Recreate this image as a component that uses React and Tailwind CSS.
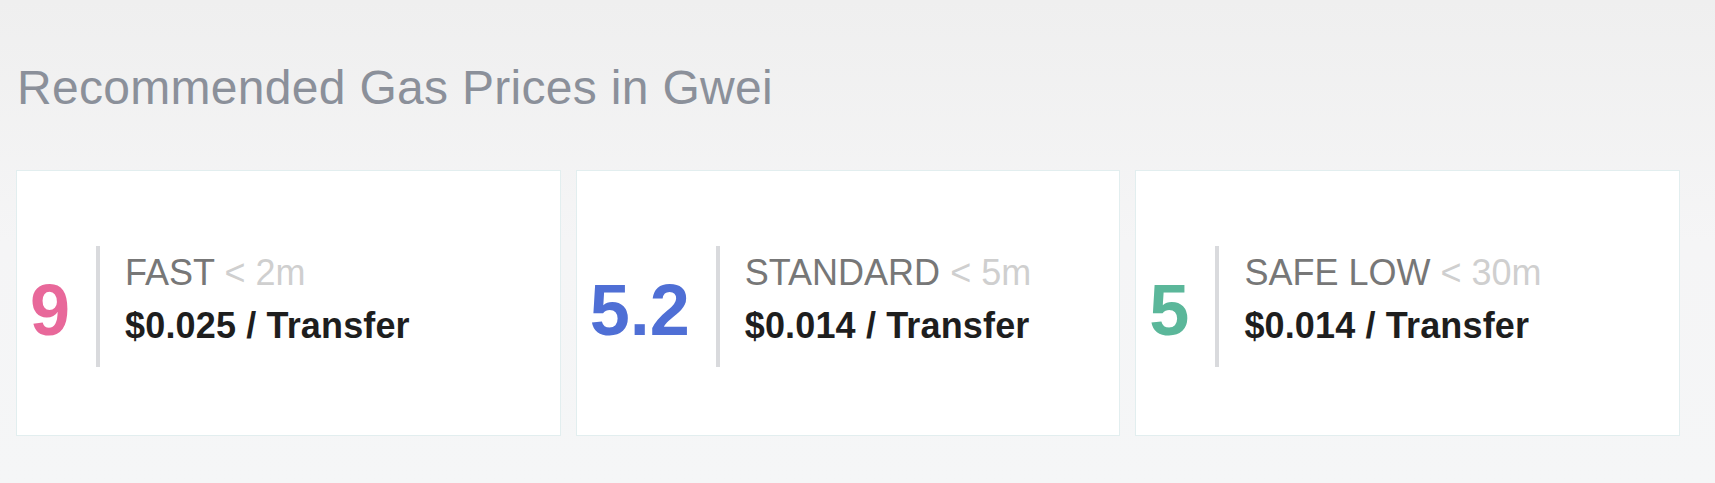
import React from "react";

const cards = [
  { value: "9", color: "text-[#e8689a]", label: "FAST", time: "< 2m", price: "$0.025 / Transfer" },
  { value: "5.2", color: "text-[#4f6fd5]", label: "STANDARD", time: "< 5m", price: "$0.014 / Transfer" },
  { value: "5", color: "text-[#5bb79a]", label: "SAFE LOW", time: "< 30m", price: "$0.014 / Transfer" },
];

export default function App() {
  return (
    <div
      className="w-[1715px] h-[483px] bg-gradient-to-b from-[#efefef] via-[#f5f5f6] to-[#f5f6f7] overflow-hidden"
      style={{ fontFamily: '"Liberation Sans", Arial, sans-serif' }}
    >
      <div className="pl-[16px] pt-[64px]">
        <h1 className="text-[48px] leading-[48px] tracking-[0.3px] text-[#8b909a] font-normal pl-[1px]">
          Recommended Gas Prices in Gwei
        </h1>
        <div className="mt-[58px] w-[1664px] grid grid-cols-3 gap-[15px]">
          {cards.map((c) => (
            <div
              key={c.label}
              className="h-[266px] bg-white border border-[#e2eeef] flex items-center pt-[6px] pl-[13px]"
            >
              <span className={`text-[72px] leading-[72px] font-bold mt-[7px] mr-[26px] ${c.color}`}>
                {c.value}
              </span>
              <div className="h-[121px] border-l-[4px] border-[#d9dadd] pl-[25px]">
                <div className="text-[36px] leading-[53px] whitespace-nowrap">
                  <span className="text-[#777777]">{c.label}</span>{" "}
                  <span className="text-[#cfcfcf]">{c.time}</span>
                </div>
                <div className="text-[36px] leading-[53px] tracking-[0.15px] font-bold text-[#1e1e1e] whitespace-nowrap">
                  {c.price}
                </div>
              </div>
            </div>
          ))}
        </div>
      </div>
    </div>
  );
}
